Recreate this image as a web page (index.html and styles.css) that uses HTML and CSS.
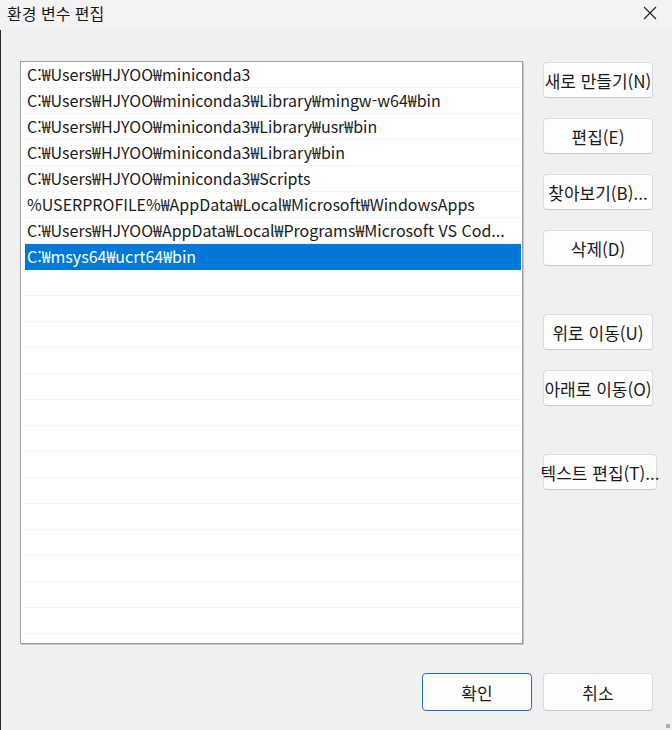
FILE: index.html
```html
<!DOCTYPE html>
<html lang="ko">
<head>
<meta charset="utf-8">
<title>환경 변수 편집</title>
<link rel="stylesheet" href="styles.css">
</head>
<body>
<div class="window">
  <div class="titlebar">
    <span class="title">환경 변수 편집</span>
    <svg class="close" width="14" height="14" viewBox="0 0 14 14"><path d="M1 1 L13 13 M13 1 L1 13" stroke="#1f1f1f" stroke-width="1.1" fill="none"/></svg>
  </div>
  <div class="main">
    <div class="list">
      <div class="row">C:₩Users₩HJYOO₩miniconda3</div>
      <div class="row">C:₩Users₩HJYOO₩miniconda3₩Library₩mingw-w64₩bin</div>
      <div class="row">C:₩Users₩HJYOO₩miniconda3₩Library₩usr₩bin</div>
      <div class="row">C:₩Users₩HJYOO₩miniconda3₩Library₩bin</div>
      <div class="row">C:₩Users₩HJYOO₩miniconda3₩Scripts</div>
      <div class="row">%USERPROFILE%₩AppData₩Local₩Microsoft₩WindowsApps</div>
      <div class="row">C:₩Users₩HJYOO₩AppData₩Local₩Programs₩Microsoft VS Cod...</div>
      <div class="row selected">C:₩msys64₩ucrt64₩bin</div>
      <div class="row"></div>
      <div class="row"></div>
      <div class="row"></div>
      <div class="row"></div>
      <div class="row"></div>
      <div class="row"></div>
      <div class="row"></div>
      <div class="row"></div>
      <div class="row"></div>
      <div class="row"></div>
      <div class="row"></div>
      <div class="row"></div>
      <div class="row"></div>
      <div class="row"></div>
    </div>
    <div class="side">
      <div class="group">
        <button class="btn">새로 만들기(N)</button>
        <button class="btn">편집(E)</button>
        <button class="btn">찾아보기(B)...</button>
        <button class="btn">삭제(D)</button>
      </div>
      <div class="group group-move">
        <button class="btn">위로 이동(U)</button>
        <button class="btn">아래로 이동(O)</button>
      </div>
      <div class="group group-text">
        <button class="btn btn-wide">텍스트 편집(T)...</button>
      </div>
    </div>
  </div>
  <div class="footer">
    <button class="btn btn-foot btn-default">확인</button>
    <button class="btn btn-foot">취소</button>
  </div>
  <div class="grip"></div>
</div>
</body>
</html>
```

FILE: styles.css
```css
html, body {
  margin: 0;
  padding: 0;
}
body {
  background: #f0f0f0;
  font-family: "Noto Sans CJK KR", "Noto Sans", sans-serif;
  color: #1a1a1a;
}
.window {
  width: 672px;
  height: 730px;
  box-sizing: border-box;
  border-left: 1px solid #2a2a2a;
  position: relative;
  background: #f0f0f0;
}
.titlebar {
  height: 30px;
  background: #f3f3f3;
  display: flex;
  align-items: center;
  justify-content: space-between;
  padding: 0 15px 0 7px;
  margin-left: -1px;
}
.title {
  font-size: 16px;
  color: #1a1a1a;
  margin-top: -4px;
}
.close {
  margin-top: -4px;
}
.main {
  display: flex;
  padding: 31px 0 0 19px;
  gap: 20px;
}
.list {
  height: 581px;
  background: #fff;
  border: 1px solid #a0a0a0;
  box-shadow: 1px 1px 0 #c4c4c4;
  padding: 0 1px 0 1px;
  box-sizing: content-box;
  overflow: hidden;
  width: 499px;
}
.row {
  height: 26px;
  box-sizing: border-box;
  border-bottom: 1px solid #f4f4f4;
  font-size: 16px;
  line-height: 25px;
  padding-left: 5px;
  white-space: nowrap;
  overflow: hidden;
  text-overflow: ellipsis;
  color: #1a1a1a;
}
.row.selected {
  background: #0078d7;
  color: #fff;
  margin-left: 3px;
  padding-left: 2px;
  border-bottom-color: #0078d7;
}
.side {
  display: flex;
  flex-direction: column;
  padding-top: 1px;
}
.group {
  display: flex;
  flex-direction: column;
  gap: 20px;
}
.group-move {
  margin-top: 48px;
}
.group-text {
  margin-top: 48px;
}
.btn {
  width: 110px;
  height: 36px;
  box-sizing: border-box;
  background: #fdfdfd;
  border: 1px solid #dcdcdc;
  border-bottom-color: #c8c8c8;
  border-radius: 4px;
  font-family: "Noto Sans CJK KR", "Noto Sans", sans-serif;
  font-size: 17px;
  color: #1a1a1a;
  padding: 0;
  white-space: nowrap;
  display: flex;
  align-items: center;
  justify-content: center;
}
.btn-wide {
  width: 114px;
}
.footer {
  display: flex;
  justify-content: flex-end;
  gap: 11px;
  padding: 29px 19px 0 0;
}
.btn-foot {
  height: 38px;
}
.btn-default {
  border: 1px solid #1a6fbf;
}
.grip {
  position: absolute;
  right: 2px;
  bottom: 2px;
  width: 4px;
  height: 4px;
  background: radial-gradient(circle, #b0b0b0 0.8px, transparent 1px) 0 0 / 2px 2px;
}
```
